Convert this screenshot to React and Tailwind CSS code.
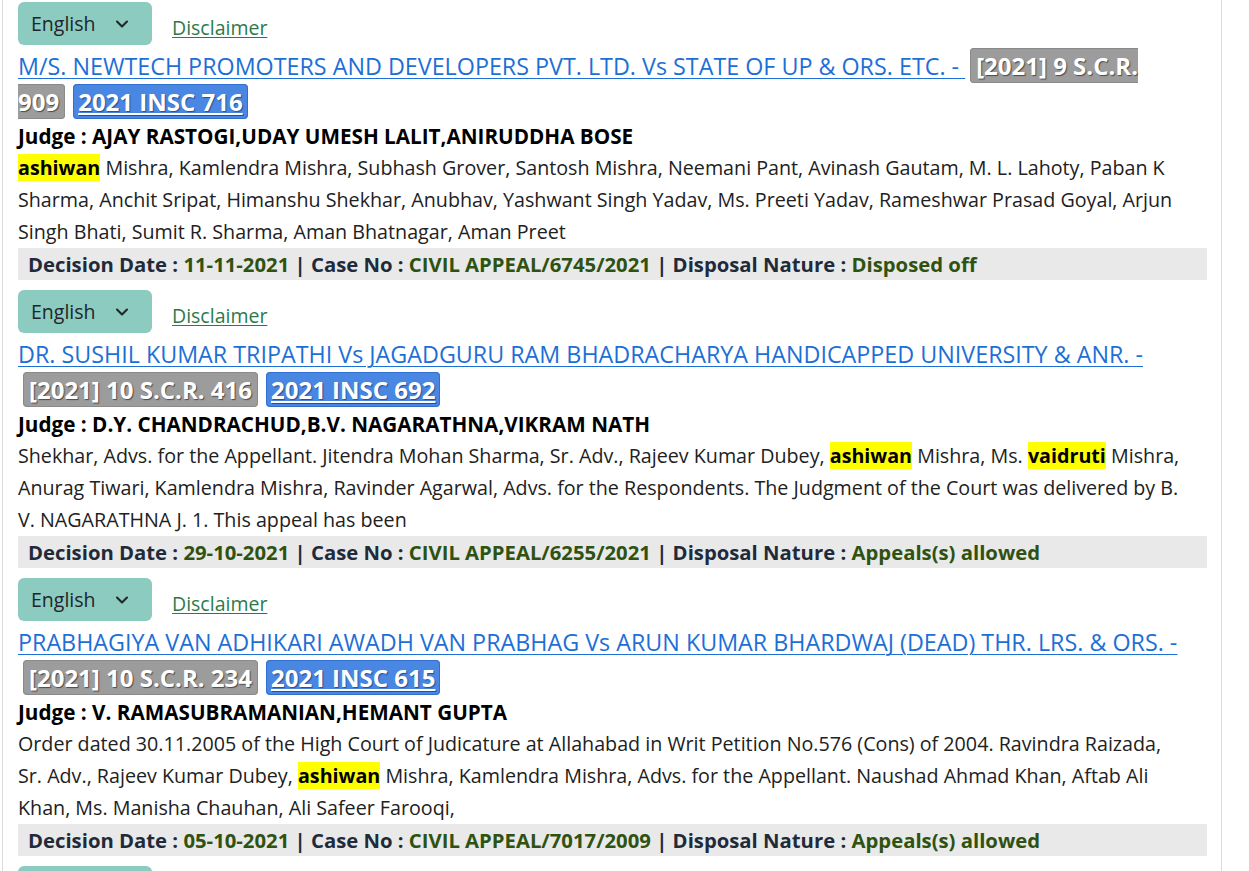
import React from "react";
import { ChevronDown } from "lucide-react";

const judgments = [
  {
    title: "M/S. NEWTECH PROMOTERS AND DEVELOPERS PVT. LTD. Vs STATE OF UP & ORS. ETC. - ",
    scr: "[2021] 9 S.C.R. 909",
    insc: "2021 INSC 716",
    judge: "AJAY RASTOGI,UDAY UMESH LALIT,ANIRUDDHA BOSE",
    body: [
      { hl: "ashiwan" },
      " Mishra, Kamlendra Mishra, Subhash Grover, Santosh Mishra, Neemani Pant, Avinash Gautam, M. L. Lahoty, Paban K Sharma, Anchit Sripat, Himanshu Shekhar, Anubhav, Yashwant Singh Yadav, Ms. Preeti Yadav, Rameshwar Prasad Goyal, Arjun Singh Bhati, Sumit R. Sharma, Aman Bhatnagar, Aman Preet",
    ],
    date: "11-11-2021",
    caseNo: "CIVIL APPEAL/6745/2021",
    disposal: "Disposed off",
  },
  {
    title: "DR. SUSHIL KUMAR TRIPATHI Vs JAGADGURU RAM BHADRACHARYA HANDICAPPED UNIVERSITY & ANR. - ",
    scr: "[2021] 10 S.C.R. 416",
    insc: "2021 INSC 692",
    judge: "D.Y. CHANDRACHUD,B.V. NAGARATHNA,VIKRAM NATH",
    body: [
      "Shekhar, Advs. for the Appellant. Jitendra Mohan Sharma, Sr. Adv., Rajeev Kumar Dubey, ",
      { hl: "ashiwan" },
      " Mishra, Ms. ",
      { hl: "vaidruti" },
      " Mishra, Anurag Tiwari, Kamlendra Mishra, Ravinder Agarwal, Advs. for the Respondents. The Judgment of the Court was delivered by B. V. NAGARATHNA J. 1. This appeal has been",
    ],
    date: "29-10-2021",
    caseNo: "CIVIL APPEAL/6255/2021",
    disposal: "Appeals(s) allowed",
  },
  {
    title: "PRABHAGIYA VAN ADHIKARI AWADH VAN PRABHAG Vs ARUN KUMAR BHARDWAJ (DEAD) THR. LRS. & ORS. - ",
    scr: "[2021] 10 S.C.R. 234",
    insc: "2021 INSC 615",
    judge: "V. RAMASUBRAMANIAN,HEMANT GUPTA",
    body: [
      "Order dated 30.11.2005 of the High Court of Judicature at Allahabad in Writ Petition No.576 (Cons) of 2004. Ravindra Raizada, Sr. Adv., Rajeev Kumar Dubey, ",
      { hl: "ashiwan" },
      " Mishra, Kamlendra Mishra, Advs. for the Appellant. Naushad Ahmad Khan, Aftab Ali Khan, Ms. Manisha Chauhan, Ali Safeer Farooqi,",
    ],
    date: "05-10-2021",
    caseNo: "CIVIL APPEAL/7017/2009",
    disposal: "Appeals(s) allowed",
  },
  {
    title: "ANOTHER MATTER Vs STATE - ",
    scr: "[2021] 9 S.C.R. 100",
    insc: "2021 INSC 600",
    judge: "-",
    body: ["..."],
    date: "-",
    caseNo: "-",
    disposal: "-",
  },
];

const JudgmentItem = ({ item }) => (
  <div className="mb-[10px]">
    {/* language + disclaimer */}
    <div className="flex items-end gap-5">
      <button className="flex h-[43px] w-[134px] items-center justify-between rounded-md bg-[#8ccbbf] pl-[13px] pr-[20px] text-[19.5px] text-[#212529]">
        English
        <ChevronDown size={20} strokeWidth={2.5} />
      </button>
      <a href="#" className="mb-[3px] text-[19.5px] text-[#2b7a4b] underline underline-offset-2">
        Disclaimer
      </a>
    </div>

    {/* title + citations */}
    <div className="mt-[3px] text-[23.3px] leading-[36px]">
      <a href="#" className="text-[#1d6fd6] underline underline-offset-[3px] decoration-1">
        {item.title}
      </a>
      <span className="ml-[5px] rounded border border-[#8a8a8a] bg-[#9c9c9c] px-[5px] text-[24px] font-bold text-white [text-shadow:1px_1px_1px_#4a4a4a]">
        {item.scr}
      </span>
      <a
        href="#"
        className="ml-[8px] rounded border border-[#2f6fcf] bg-[#4a87e2] px-[4px] text-[24px] font-bold text-white underline decoration-2 underline-offset-2 [text-shadow:1px_1px_1px_#1f4f99]"
      >
        {item.insc}
      </a>
    </div>

    <div className="text-[20.7px] font-bold leading-8 text-black">
      Judge : {item.judge}
    </div>

    <p className="pr-[21px] text-[19.7px] leading-8 text-[#212121]">
      {item.body.map((part, i) =>
        typeof part === "string" ? (
          <React.Fragment key={i}>{part}</React.Fragment>
        ) : (
          <span key={i} className="bg-[#ffff00] font-bold text-black">
            {part.hl}
          </span>
        )
      )}
    </p>

    <div className="h-8 bg-[#e9e9e9] pl-[10px] text-[20.3px] font-bold leading-8 text-[#1f2a3a]">
      Decision Date : <span className="text-[#2f5211]">{item.date}</span> | Case No :{" "}
      <span className="text-[#2f5211]">{item.caseNo}</span> | Disposal Nature :{" "}
      <span className="text-[#2f5211]">{item.disposal}</span>
    </div>
  </div>
);

export default function App() {
  return (
    <div className="h-[871px] overflow-hidden bg-white font-['Open_Sans',sans-serif]">
      <div className="ml-[2px] w-[1220px] border-x border-[#dcdcdc] pl-[15px] pr-[14px] pt-[2px]">
        {judgments.map((item, i) => (
          <JudgmentItem key={i} item={item} />
        ))}
      </div>
    </div>
  );
}
